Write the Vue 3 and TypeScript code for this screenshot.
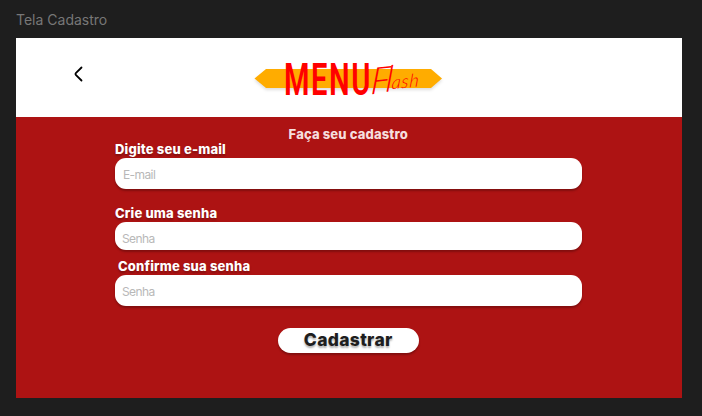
<script setup lang="ts">
import { ref } from 'vue'

interface Field {
  id: string
  label: string
  placeholder: string
  type: string
}

const fields: Field[] = [
  { id: 'email', label: 'Digite seu e-mail', placeholder: 'E-mail', type: 'email' },
  { id: 'senha', label: 'Crie uma senha', placeholder: 'Senha', type: 'password' },
  { id: 'confirma', label: 'Confirme sua senha', placeholder: 'Senha', type: 'password' },
]
const values = ref<Record<string, string>>({ email: '', senha: '', confirma: '' })
</script>

<template>
  <main class="canvas">
    <div class="frame-name">Tela Cadastro</div>
    <section class="frame">
      <header class="top">
        <button class="back" type="button" aria-label="Voltar">
          <svg width="10" height="16" viewBox="0 0 10 16">
            <path d="M8.5 1.5 2.8 7.2Q2 8 2.800 8.800L8.5 14.5" fill="none" stroke="#000" stroke-width="1.8" stroke-linecap="round" />
          </svg>
        </button>
        <svg class="logo" width="200" height="50" viewBox="0 0 200 50">
          <path class="ribbon" d="M6.5 21.5 18 12H183L194 21.5 183 31H18Z" fill="#ffac00" />
          <text class="menu" transform="translate(36 37.5) scale(.67 1)">MENU</text>
          <text class="flash" transform="translate(122 37.5) rotate(-6) skewX(-10)"><tspan class="initial">F</tspan><tspan class="tall" dy="-1">l</tspan><tspan dy="-2">ash</tspan></text>
        </svg>
      </header>
      <form class="form" @submit.prevent>
        <h1>Faça seu cadastro</h1>
        <div v-for="f in fields" :key="f.id" class="field" :class="f.id">
          <label :for="f.id">{{ f.label }}</label>
          <input :id="f.id" v-model="values[f.id]" :type="f.type" :placeholder="f.placeholder" />
        </div>
        <button class="submit" type="submit"><span>Cadastrar</span></button>
      </form>
    </section>
  </main>
</template>

<style>
body { margin: 0; background: #1e1e1e; }
</style>

<style scoped>
.canvas {
  box-sizing: border-box;
  width: 702px;
  height: 416px;
  padding: 11px 20px 0 16px;
  background: #1e1e1e;
  font-family: Inter, sans-serif;
  overflow: hidden;
}
.frame-name { height: 27px; font-size: 14px; line-height: 18px; color: #777; }
.frame { width: 665.5px; height: 360.4px; background: #ad1313; }
.top { display: flex; height: 79px; background: #fff; }
.back { display: flex; width: 10px; height: 16px; margin: 28px 0 0 57px; padding: 0; border: 0; background: none; }
.logo { margin: 19px 0 0 165px; overflow: visible; }
.ribbon { filter: drop-shadow(0 2px 1.5px rgba(0, 0, 0, 0.13)); }
.menu { font: 600 43.5px Roboto, sans-serif; fill: #f00; letter-spacing: 2.3px; }
.flash { font: italic 300 18.5px Lato, sans-serif; fill: #f00; letter-spacing: 0.7px; }
.initial { font-size: 37px; letter-spacing: -4.5px; }
.tall { font-size: 36px; letter-spacing: -1.5px; }
.form { display: flex; flex-direction: column; padding: 9px 99px 0; }
h1 {
  margin: 0 0 0 -1px;
  height: 15px;
  font-size: 13px;
  line-height: 16px;
  font-weight: 800;
  letter-spacing: 0.15px;
  text-align: center;
  color: #f5dede;
}
.field { display: flex; flex-direction: column; }
label {
  height: 17px;
  font-size: 13px;
  line-height: 16px;
  font-weight: 800;
  letter-spacing: 0.18px;
  color: #fff;
  text-shadow: 0 2px 2px rgba(0, 0, 0, 0.25);
}
input {
  box-sizing: border-box;
  width: 467px;
  height: 30.5px;
  margin: 0;
  padding: 3px 7px 0;
  border: 0;
  border-radius: 11px;
  outline: 0;
  background: #fff;
  box-shadow: 0 2px 2px rgba(0, 0, 0, 0.25);
  font: 400 12px Inter, sans-serif;
  letter-spacing: -0.6px;
  color: #222;
}
input::placeholder { color: #b8b8b8; opacity: 1; }
.email input { padding-left: 8px; }
.senha { margin-top: 16.5px; }
.senha input { width: 466.5px; height: 28px; padding-top: 4px; }
.confirma { margin-top: 8px; }
.confirma label { padding-left: 3px; }
.submit {
  align-self: center;
  width: 141px;
  height: 24.5px;
  margin: 22.500px 0 0 -1px;
  padding: 0;
  border: 0;
  border-radius: 13px;
  background: #fff;
  box-shadow: 0 2px 2px rgba(0, 0, 0, 0.25);
  font: 800 17.5px/24px Inter, sans-serif;
  letter-spacing: 0.3px;
  color: #1e1e1e;
  text-shadow: 0 2px 2px rgba(0, 0, 0, 0.3);
}
.submit span { display: block; }
</style>
